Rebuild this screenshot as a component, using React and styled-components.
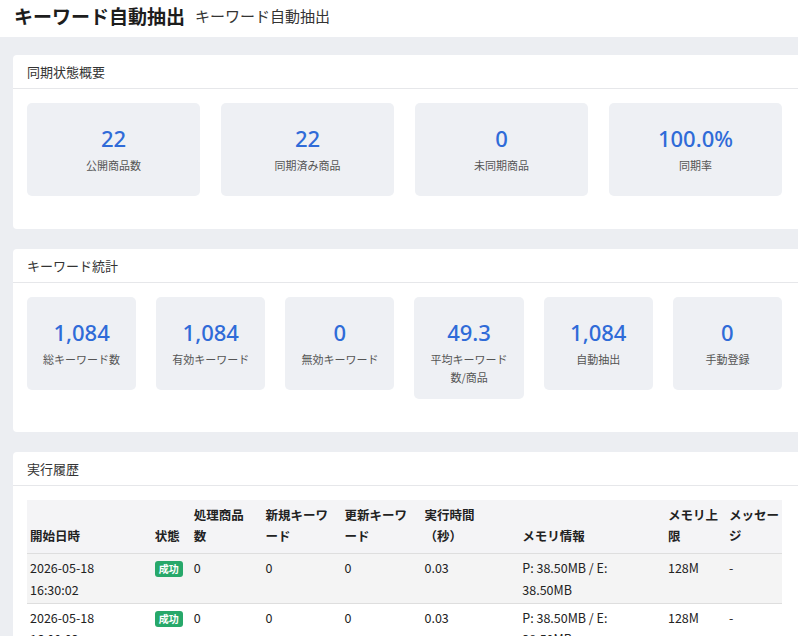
import React from 'react'
import styled, { createGlobalStyle } from 'styled-components'

const Global = createGlobalStyle`
  body { margin: 0; background: #eceef2; font-family: "Noto Sans CJK JP", "Noto Sans", sans-serif; color: #222; }
`

const TopBar = styled.div`
  background: #fff;
  height: 43px;
  display: flex;
  align-items: center;
  gap: 10px;
  padding: 0 14px;
  margin-top: -6px;
`
const Title = styled.h1`
  margin: 0; font-size: 19px; font-weight: 700; color: #1d1d1d;
`
const Sub = styled.span`
  font-size: 15px; color: #333;
`
const Main = styled.div`
  padding: 18px 0 0 13px;
  display: flex; flex-direction: column; gap: 20px;
`
const Card = styled.section`
  background: #fff;
  border-radius: 4px 0 0 4px;
  overflow: hidden;
`
const CardHead = styled.div`
  height: 33px; display: flex; align-items: center; padding: 0 14px;
  font-size: 13px; color: #333; border-bottom: 1px solid #e6e7ea;
`
const CardBody = styled.div`
  padding: 14px 16px 33px 14px;
`
const Stats = styled.div`
  display: grid;
  grid-template-columns: repeat(${p => p.$cols}, 1fr);
  gap: ${p => p.$gap}px;
  align-items: start;
`
const Stat = styled.div`
  background: #eef0f4; border-radius: 5px;
  min-height: 93px; box-sizing: border-box;
  display: flex; flex-direction: column; align-items: center;
  padding: 22px 8px 12px; text-align: center;
`
const Num = styled.div`
  font-family: "Noto Sans", sans-serif; font-size: 22px; font-weight: 500; color: #2f6bd8; line-height: 1.2;
`
const Label = styled.div`
  font-size: 11px; color: #555; margin-top: 6px; line-height: 1.6; max-width: 84px;
`
const Table = styled.table`
  width: 100%; border-collapse: collapse; font-size: 12.5px;
  th { background: #f4f4f6; font-weight: 700; text-align: left; vertical-align: bottom; padding: 4px 3px 6px; line-height: 1.75; white-space: nowrap; }
  td { vertical-align: top; padding: 3px 3px 3px; line-height: 1.7; border-top: 1px solid #dedede; }
  tbody tr:nth-child(odd) { background: #f4f4f4; }
`
const Badge = styled.span`
  display: inline-block; background: #27a86a; color: #fff; font-size: 10px; font-weight: 700;
  border-radius: 3px; padding: 0 4px; line-height: 16px; margin-top: 3px;
`

const sync = [['22', '公開商品数'], ['22', '同期済み商品'], ['0', '未同期商品'], ['100.0%', '同期率']]
const kw = [['1,084', '総キーワード数'], ['1,084', '有効キーワード'], ['0', '無効キーワード'], ['49.3', '平均キーワード数/商品'], ['1,084', '自動抽出'], ['0', '手動登録']]
const rows = [['2026-05-18', '16:30:02'], ['2026-05-18', '16:00:02']]
const heads = [['開始日時'], ['状態'], ['処理商品', '数'], ['新規キーワ', 'ード'], ['更新キーワ', 'ード'], ['実行時間', '（秒）'], ['メモリ情報'], ['メモリ上', '限'], ['メッセー', 'ジ']]

export default function App() {
  return (
    <>
      <Global />
      <TopBar><Title>キーワード自動抽出</Title><Sub>キーワード自動抽出</Sub></TopBar>
      <Main>
        <Card>
          <CardHead>同期状態概要</CardHead>
          <CardBody>
            <Stats $cols={4} $gap={21}>
              {sync.map(([n, l]) => <Stat key={l}><Num>{n}</Num><Label>{l}</Label></Stat>)}
            </Stats>
          </CardBody>
        </Card>
        <Card>
          <CardHead>キーワード統計</CardHead>
          <CardBody>
            <Stats $cols={6} $gap={20}>
              {kw.map(([n, l]) => <Stat key={l}><Num>{n}</Num><Label>{l}</Label></Stat>)}
            </Stats>
          </CardBody>
        </Card>
        <Card>
          <CardHead>実行履歴</CardHead>
          <CardBody>
            <Table>
              <colgroup>
                <col style={{ width: 125 }} /><col style={{ width: 39 }} /><col style={{ width: 72 }} />
                <col style={{ width: 79 }} /><col style={{ width: 80 }} /><col style={{ width: 98 }} />
                <col style={{ width: 146 }} /><col style={{ width: 61 }} /><col />
              </colgroup>
              <thead>
                <tr>
                  {heads.map((h, i) => <th key={i}>{h[0]}{h[1] && <><br />{h[1]}</>}</th>)}
                </tr>
              </thead>
              <tbody>
                {rows.map(([d, t]) => (
                  <tr key={t}>
                    <td>{d}<br />{t}</td><td><Badge>成功</Badge></td><td>0</td><td>0</td><td>0</td>
                    <td>0.03</td><td>P: 38.50MB / E:<br />38.50MB</td><td>128M</td><td>-</td>
                  </tr>
                ))}
              </tbody>
            </Table>
          </CardBody>
        </Card>
      </Main>
    </>
  )
}
